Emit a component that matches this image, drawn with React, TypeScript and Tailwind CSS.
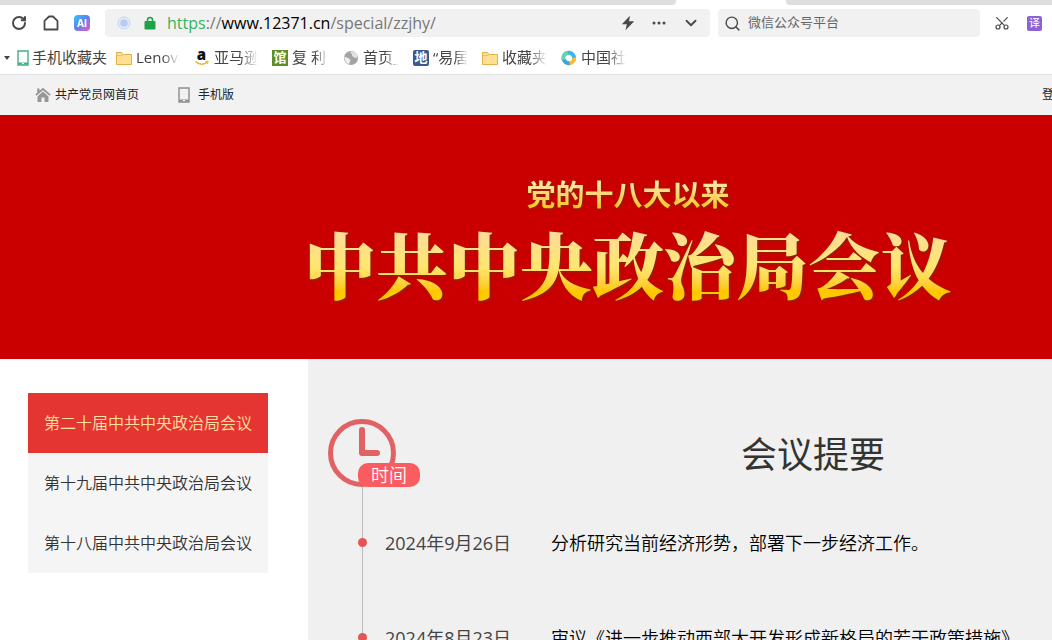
import type { ReactNode } from 'react';
import { ChevronDown, RotateCw, Scissors, Search } from 'lucide-react';

interface Bookmark {
  label: string;
  icon: ReactNode;
  width: string;
}

interface Meeting {
  date: string;
  summary: string;
}

const sessions = [
  '第二十届中共中央政治局会议',
  '第十九届中共中央政治局会议',
  '第十八届中共中央政治局会议',
];

const meetings: Meeting[] = [
  { date: '2024年9月26日', summary: '分析研究当前经济形势，部署下一步经济工作。' },
  { date: '2024年8月23日', summary: '审议《进一步推动西部大开发形成新格局的若干政策措施》' },
];

function FolderIcon() {
  return (
    <svg viewBox="0 0 16 16" className="size-4">
      <path d="M.5 2.500h5l1.500 2h8.500v10H.5z" fill="#ffdf91" stroke="#e3b04b" />
      <path d="M1 5.500h5.500l1-1" fill="none" stroke="#efc25f" />
    </svg>
  );
}

function PhoneIcon({ className }: { className: string }) {
  return (
    <svg viewBox="0 0 12 16" className={className} fill="none" stroke="currentColor">
      <path d="M1 1h10v14H1z" strokeWidth="1.4" />
      <path d="M1 13.500h10" strokeWidth="2" />
      <path d="M5 13.500h2" stroke="white" strokeWidth="1" />
    </svg>
  );
}

function AmazonIcon() {
  return (
    <svg viewBox="0 0 16 16" className="size-4">
      <text x="7.500" y="10" textAnchor="middle" fontSize="15" fontWeight="800" fontFamily="Open Sans, sans-serif" fill="#111">
        a
      </text>
      <path d="M1.500 11.500c3.500 3.200 8 3.200 11.500.8" fill="none" stroke="#f0b429" strokeWidth="1.600" />
      <path d="M11.500 11.500l2.500-.2-.5 2.600" fill="none" stroke="#f0b429" strokeWidth="1.100" />
    </svg>
  );
}

function GlobeIcon() {
  return (
    <svg viewBox="0 0 16 16" className="size-4">
      <circle cx="8" cy="8" r="7" fill="#a3a3a3" />
      <path d="M8.500 1.500c-2 .5-1.200 2 .3 2.300 1 .4-.5 1.700.6 2.400 1.500.9 2.200 2 4.500 1.600l.6-2.800C13.500 3 11 1.300 8.500 1.500z" fill="#e2e2e2" />
      <path d="M1.500 7c2 .2 4 1 5.500 2.500 1.200 1.200-.8 2.500-.8 4.700C3.500 13.500 1.400 10.500 1.500 7z" fill="#f0f0f0" />
    </svg>
  );
}

function SwirlIcon() {
  return (
    <svg viewBox="0 0 16 16" className="size-4" fill="none" strokeWidth="4">
      <path d="M3 10.500A5.200 5.200 0 0 1 8 2.800" stroke="#5fd3b4" />
      <path d="M7 2.900a5.200 5.200 0 0 1 6 6" stroke="#38b6e8" />
      <path d="M13.200 7.500A5.200 5.200 0 0 1 7 13.100" stroke="#f5b93c" />
      <path d="M8.500 13.200a5.200 5.200 0 0 1-5.500-3.500" stroke="#3aa5dc" />
    </svg>
  );
}

function HomeIcon() {
  return (
    <svg viewBox="0 0 16 16" className="size-4" fill="#979797">
      <path d="M8 .8L4.500 3.800V1.500H2.200v4.300L.3 7.500l1.200 1.300L8 3.200l6.500 5.600 1.200-1.300z" />
      <path d="M8 4.600L2.500 9.400V15h4v-4.500h3V15h4V9.400z" />
    </svg>
  );
}

function ClockIcon() {
  return (
    <svg viewBox="0 0 68 68" className="size-[68px] text-[#e06264]" fill="none" stroke="currentColor">
      <circle cx="34" cy="34" r="31.500" strokeWidth="5" />
      <path d="M34 11v23h15" strokeWidth="6" strokeLinecap="round" strokeLinejoin="round" />
    </svg>
  );
}

const bookmarks: Bookmark[] = [
  { label: 'Lenovo', icon: <FolderIcon />, width: 'w-[44px]' },
  { label: '亚马逊', icon: <AmazonIcon />, width: 'w-[44px]' },
  {
    label: '复 利',
    icon: <span className="flex size-4 items-center justify-center bg-[#5f8f1f] text-[13px] font-bold text-white">馆</span>,
    width: 'w-[37px]',
  },
  { label: '首页_', icon: <GlobeIcon />, width: 'w-[36px]' },
  {
    label: '“易居',
    icon: <span className="flex size-4 items-center justify-center rounded-xs bg-[#3b5a88] text-[13px] font-bold text-white">地</span>,
    width: 'w-[35px]',
  },
  { label: '收藏夹', icon: <FolderIcon />, width: 'w-[45px]' },
  { label: '中国社', icon: <SwirlIcon />, width: 'w-[45px]' },
];

function BrowserBar() {
  return (
    <header className="border-b border-[#e3e3e3] bg-white">
      <div className="flex h-[5px]">
        <div className="w-[676px] rounded-br bg-[#dedede]" />
        <div className="w-[110px]" />
        <div className="grow rounded-bl bg-[#dedede]" />
      </div>

      <div className="flex h-9 items-center pr-2.5 pl-[11px] text-[#4a4a4a]">
        <button aria-label="刷新">
          <RotateCw className="size-4" strokeWidth={3} />
        </button>
        <button aria-label="主页" className="ml-4">
          <svg viewBox="0 0 16 16" className="size-4" fill="none" stroke="currentColor" strokeWidth="1.800">
            <path d="M1.500 14.500V5.800L6 1.500h4l4.500 4.300v8.700z" strokeLinejoin="round" />
          </svg>
        </button>
        <button className="ml-[15px] size-4 rounded bg-linear-to-br from-[#22c7ee] via-[#5b7df0] to-[#e04fc0] text-center text-[10px] leading-4 font-bold text-white">
          AI
        </button>

        <div className="ml-[15px] flex h-7 w-[605px] items-center rounded bg-[#f1f1f1] pr-2.5 pl-3">
          <svg viewBox="0 0 14 14" className="size-3.5">
            <circle cx="7" cy="7" r="6" fill="#e4ebfb" stroke="#c5d3f5" />
            <circle cx="7" cy="7" r="3.800" fill="#b9caf3" />
          </svg>
          <svg viewBox="0 0 12 14" className="ml-[13px] h-3.5 w-3">
            <path d="M3.500 6V4a2.500 2.500 0 0 1 5 0v2" fill="none" stroke="#1da345" strokeWidth="1.500" />
            <rect x="0.500" y="5" width="11" height="8.500" rx="1" fill="#1da345" />
          </svg>
          <div className="ml-[11px] grow text-base text-[#777]">
            <span className="text-[#32b45c]">https</span>://<span className="text-black">www.12371.cn</span>/special/zzjhy/
          </div>
          <button aria-label="极速模式">
            <svg viewBox="0 0 14 16" className="h-4 w-3.5" fill="currentColor">
              <path d="M9 .8L.8 9.200h5L4.500 15.200 13.200 6.300H8z" />
            </svg>
          </button>
          <button aria-label="更多" className="ml-[17px]">
            <svg viewBox="0 0 14 4" className="h-1 w-3.5" fill="currentColor">
              <circle cx="2" cy="2" r="1.500" />
              <circle cx="7" cy="2" r="1.500" />
              <circle cx="12" cy="2" r="1.500" />
            </svg>
          </button>
          <button aria-label="展开" className="ml-4">
            <ChevronDown className="size-[18px]" strokeWidth={2.5} />
          </button>
        </div>

        <label className="ml-2 flex h-7 min-w-0 grow items-center gap-[7px] rounded bg-[#f1f1f1] px-1.5">
          <Search className="size-[17px] shrink-0" strokeWidth={2} />
          <input
            aria-label="搜索"
            className="w-full min-w-0 text-[13px] outline-none placeholder:text-[#666]"
            placeholder="微信公众号平台"
          />
        </label>
        <button aria-label="截图" className="ml-3.5">
          <Scissors className="size-4 -rotate-90" strokeWidth={1.8} />
        </button>
        <button className="ml-[17px] size-[15px] shrink-0 rounded-xs bg-[#8e62d0] text-center text-[11px] leading-[14px] text-white">
          译
        </button>
      </div>

      <nav className="flex h-[33px] items-center gap-[9px] pl-1 text-[15px] text-[#444]">
        <div className="flex items-center">
          <svg viewBox="0 0 6 4" className="h-1 w-1.5" fill="#444">
            <path d="M0 0h6L3 4z" />
          </svg>
          <a href="#" className="flex items-center gap-[3px] pl-[7px]">
            <PhoneIcon className="h-4 w-3 text-[#43b081]" />
            手机收藏夹
          </a>
        </div>
        <div className="flex items-center gap-3.5">
          {bookmarks.map((item) => (
            <a key={item.label} href="#" className="flex items-center gap-1">
              {item.icon}
              <span className={`${item.width} overflow-hidden whitespace-nowrap [mask-image:linear-gradient(to_right,black_60%,transparent)]`}>
                {item.label}
              </span>
            </a>
          ))}
        </div>
      </nav>
    </header>
  );
}

function SiteNav() {
  return (
    <nav className="flex h-10 items-center bg-[#f2f2f2] pr-[190px] pl-[35px] text-xs text-[#222]">
      <a href="#" className="flex items-center gap-1">
        <HomeIcon />
        共产党员网首页
      </a>
      <a href="#" className="ml-[39px] flex items-center gap-2">
        <PhoneIcon className="h-4 w-3 text-[#8f8f8f]" />
        手机版
      </a>
      <a href="#" className="ml-auto">登录</a>
    </nav>
  );
}

function Banner() {
  return (
    <div className="flex h-[244px] flex-col items-center bg-[#ca0000] pt-[60px] whitespace-nowrap">
      <p className="bg-linear-to-b from-[#ffe6a5] from-20% to-[#ffc61a] to-80% bg-clip-text text-[29px] leading-10 font-bold text-transparent drop-shadow-[1px_1px_1px_#7a2a00]">
        党的十八大以来
      </p>
      <h1 className="bg-linear-to-b from-[#ffdc96] from-20% via-[#ffe670] via-55% to-[#ffc800] to-80% bg-clip-text font-['Noto_Serif_CJK_SC','Noto_Sans_CJK_SC',serif] text-[72px] leading-[94px] font-black text-transparent drop-shadow-[1px_1px_1px_#7a2a00]">
        中共中央政治局会议
      </h1>
    </div>
  );
}

function Timeline() {
  return (
    <main className="grow bg-[#f0f0f0] pt-[60px] pl-5">
      <div className="flex">
        <div className="relative h-[68px] w-[92px]">
          <ClockIcon />
          <span className="absolute right-0 bottom-0 h-6 w-[62px] rounded-[10px] bg-[#fa5c60] text-center text-lg leading-6 font-[350] text-white">
            时间
          </span>
        </div>
        <h2 className="pt-2.5 pl-[321px] text-4xl leading-[52px] text-[#333]">会议提要</h2>
      </div>
      <ol className="ml-[34px] border-l border-[#bbb] pt-2">
        {meetings.map((meeting) => (
          <li key={meeting.date} className="flex h-[95px] items-center text-lg font-[350] whitespace-nowrap">
            <span className="-ml-[5px] size-[9px] rounded-full bg-[#e35557]" />
            <time className="w-[184px] shrink-0 pl-[18px] font-normal text-[#444]">{meeting.date}</time>
            <p className="text-black">{meeting.summary}</p>
          </li>
        ))}
      </ol>
    </main>
  );
}

function App() {
  return (
    <div className="h-screen overflow-hidden bg-white font-['Open_Sans','Noto_Sans_CJK_SC',sans-serif]">
      <BrowserBar />
      {/* the site is wider than a small window, so it runs off the right edge */}
      <div className="min-w-[1256px]">
        <SiteNav />
        <Banner />
        <div className="flex">
          <aside className="w-[308px] shrink-0 pt-[34px] pl-7">
            <ul className="w-60 bg-[#f5f5f5] text-base font-[350] text-[#333]">
              {sessions.map((name, i) => (
                <li key={name}>
                  <a
                    href="#"
                    className={`block h-[60px] px-4 leading-[60px] ${i === 0 ? 'bg-[#e43533] text-[#ffe0a0]' : ''}`}
                  >
                    {name}
                  </a>
                </li>
              ))}
            </ul>
          </aside>
          <Timeline />
        </div>
      </div>
    </div>
  );
}

export default App;
